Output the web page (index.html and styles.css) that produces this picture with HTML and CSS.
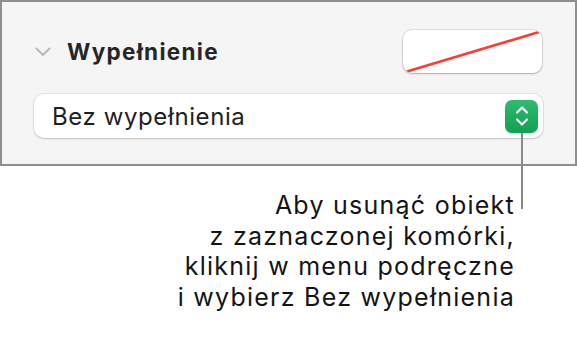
FILE: index.html
```html
<!DOCTYPE html>
<html lang="pl">
<head>
    <meta charset="UTF-8">
    <meta name="viewport" content="width=device-width, initial-scale=1.0">
    <title>Wypełnienie</title>
    <link rel="stylesheet" href="styles.css">
</head>
<body>
    <section class="panel">
        <div class="panel-head">
            <svg class="chevron" width="16" height="10" viewBox="0 0 16 10">
                <polyline points="1.5,1.5 8,8 14.5,1.5" fill="none" stroke="#b9b9b9" stroke-width="2" stroke-linecap="round" stroke-linejoin="round"/>
            </svg>
            <h2 class="panel-title">Wypełnienie</h2>
            <div class="swatch">
                <svg width="139" height="43" viewBox="0 0 139 43">
                    <line x1="4" y1="41.5" x2="136" y2="2" stroke="#ff3b30" stroke-width="2.6"/>
                </svg>
            </div>
        </div>

        <div class="popup">
            <span class="popup-value">Bez wypełnienia</span>
            <div class="stepper">
                <svg width="14" height="22" viewBox="0 0 14 22">
                    <polyline points="2,7.5 7,2.5 12,7.5" fill="none" stroke="#fff" stroke-width="2.2" stroke-linecap="round" stroke-linejoin="round"/>
                    <polyline points="2,14.5 7,19.5 12,14.5" fill="none" stroke="#fff" stroke-width="2.2" stroke-linecap="round" stroke-linejoin="round"/>
                </svg>
            </div>
        </div>
    </section>

    <p class="caption">
        Aby usunąć obiekt<br>
        z zaznaczonej komórki,<br>
        kliknij w menu podręczne<br>
        i wybierz Bez wypełnienia
    </p>
</body>
</html>
```

FILE: styles.css
```css
* {
    margin: 0;
    padding: 0;
    box-sizing: border-box;
}

body {
    width: 577px;
    font-family: Inter, "Noto Sans", sans-serif;
    background-color: #ffffff;
    color: #1c1c1c;
}

.panel {
    width: 577px;
    height: 166px;
    padding: 28px 32px 0 32px;
    background-color: #f5f5f5;
    border: 2px solid #8f8f8f;
}

.panel-head {
    display: flex;
    align-items: center;
    height: 43px;
}

.chevron {
    margin-left: 1px;
}

.panel-title {
    margin-left: 16px;
    font-size: 22.5px;
    font-weight: 700;
    letter-spacing: 1.3px;
    color: #262626;
    flex-grow: 1;
}

.swatch {
    width: 139px;
    height: 43px;
    margin-right: 1px;
    background-color: #ffffff;
    border-radius: 9px;
    overflow: hidden;
    box-shadow: 0 0 0 1px rgba(0, 0, 0, 0.08), 0 1px 2px rgba(0, 0, 0, 0.22);
}

.swatch svg {
    display: block;
}

.popup {
    display: flex;
    align-items: center;
    justify-content: space-between;
    height: 44px;
    margin-top: 21px;
    padding: 0 5px 0 18px;
    background-color: #ffffff;
    border-radius: 10px;
    box-shadow: 0 0 0 1px rgba(0, 0, 0, 0.06), 0 1px 2px rgba(0, 0, 0, 0.16);
}

.popup-value {
    font-size: 24px;
    letter-spacing: 0.6px;
    color: #1f1f1f;
}

.stepper {
    position: relative;
    display: flex;
    align-items: center;
    justify-content: center;
    width: 33px;
    height: 33px;
    border-radius: 7px;
    background: linear-gradient(#2ebb72, #12a052);
    box-shadow: 0 1px 1px rgba(0, 0, 0, 0.15);
}

/* callout line running from the button down to the caption */
.stepper::after {
    content: "";
    position: absolute;
    top: 33px;
    left: 16px;
    width: 2px;
    height: 76px;
    background-color: #8a8a8a;
}

.caption {
    margin-top: 24px;
    padding-right: 62px;
    text-align: right;
    font-size: 25px;
    letter-spacing: 1.25px;
    line-height: 30.5px;
    color: #141414;
}
```
